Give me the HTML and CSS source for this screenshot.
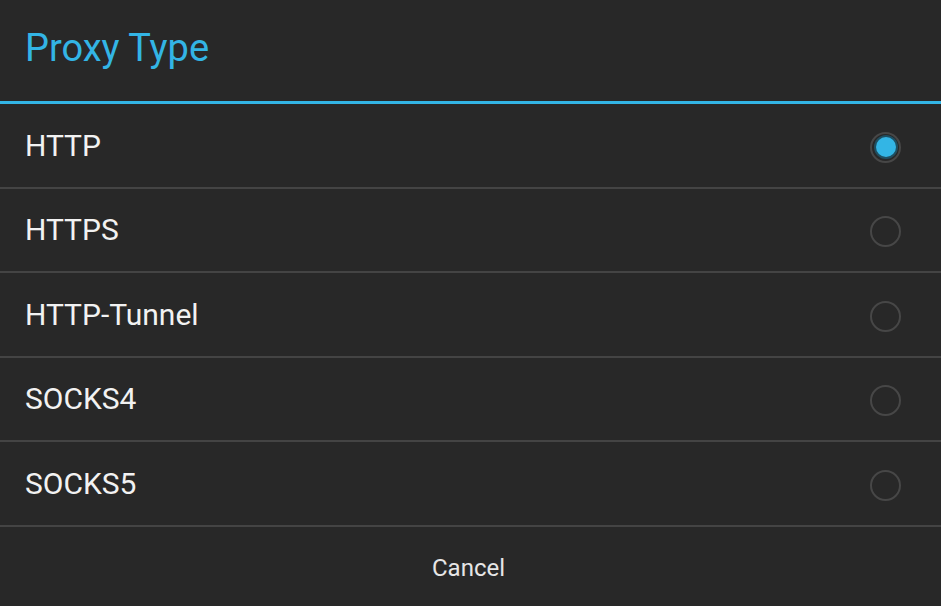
FILE: index.html
```html
<html>
    <head>
        <title>Proxy Type</title>
        <link rel="stylesheet" href="styles.css">
    </head>
    <body>
        <div class="dialog">
            <h2 class="titulo">Proxy Type</h2>
            <!--Lista de opciones, solo una marcada-->
            <ul class="lista">
                <li class="opcion"><span class="texto">HTTP</span><span class="radio marcado"></span></li>
                <li class="opcion"><span class="texto">HTTPS</span><span class="radio"></span></li>
                <li class="opcion"><span class="texto">HTTP-Tunnel</span><span class="radio"></span></li>
                <li class="opcion"><span class="texto">SOCKS4</span><span class="radio"></span></li>
                <li class="opcion"><span class="texto">SOCKS5</span><span class="radio"></span></li>
            </ul>
            <div class="pie">
                <button class="boton">Cancel</button>
            </div>
        </div>
    </body>
</html>
```

FILE: styles.css
```css
body
{
    margin: 0;
    background-color: #282828;
    font-family: Roboto, "Noto Sans", sans-serif;
    overflow: hidden;
}
.dialog
{
    width: 941px;
    height: 606px;
    display: flex;
    flex-direction: column;
}
.titulo
{
    margin: 0;
    height: 104px;
    box-sizing: border-box;
    padding: 26px 25px 0;
    font-size: 38px;
    font-weight: normal;
    color: #33b5e5;
    border-bottom: 3px solid #33b5e5;
}
.lista
{
    list-style: none;
    margin: 0;
    padding: 0;
}
.opcion
{
    height: 84.5px;
    box-sizing: border-box;
    border-bottom: 2px solid #444444;
    display: flex;
    align-items: center;
    justify-content: space-between;
    padding: 0 40px 0 25px;
    font-size: 30px;
    color: #f2f2f2;
}
.radio
{
    width: 27px;
    height: 27px;
    border-radius: 50%;
    border: 2px solid #474747;
    margin-top: 4px;
    position: relative;
}
.marcado::after
{
    /*Punto azul de la opcion elegida*/
    content: "";
    position: absolute;
    left: 3.5px;
    top: 3.5px;
    width: 20px;
    height: 20px;
    border-radius: 50%;
    background-color: #33b5e5;
    box-shadow: 0 0 0 2px #1f4f61;
}
.pie
{
    flex: 1;
    display: flex;
    align-items: center;
    justify-content: center;
    padding-right: 4px;
}
.boton
{
    background: none;
    border: none;
    font-family: Roboto, "Noto Sans", sans-serif;
    font-size: 24px;
    color: #e6e6e6;
    margin-top: 4px;
}
```
